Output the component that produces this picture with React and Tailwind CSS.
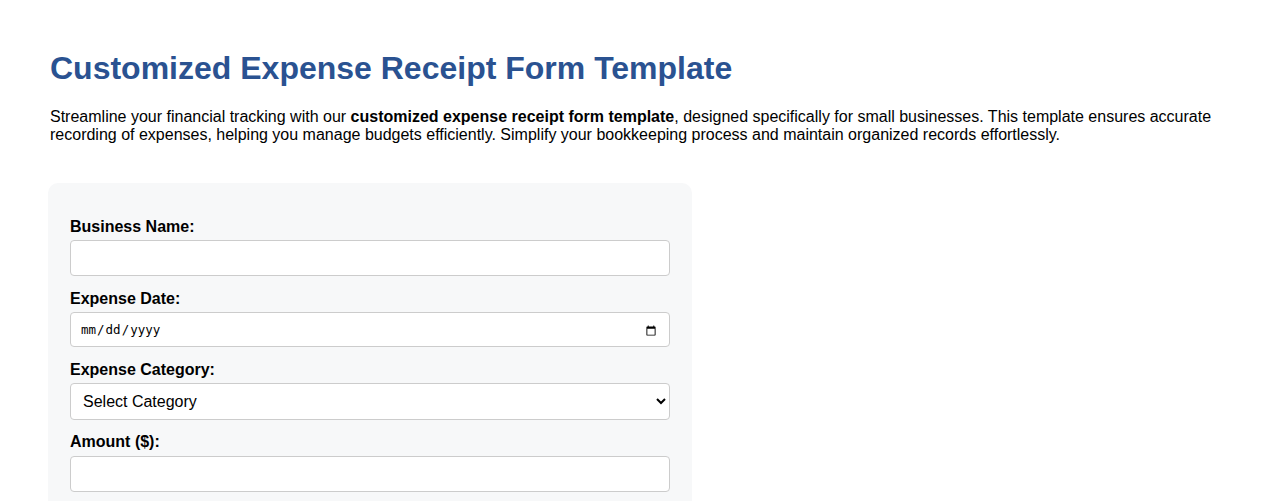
export default function App() {
  const label = "block text-[16px] leading-[18px] font-bold text-black";
  const box =
    "block w-full bg-white border border-[#cccccc] rounded-[4px] text-black outline-none";
  return (
    <div className="min-h-screen bg-white pl-[48px] pr-[48px] pt-[50px]" style={{ fontFamily: '"Liberation Sans", Arial, sans-serif' }}>
      <h1 className="ml-[2px] text-[32px] leading-[37px] font-bold text-[#2a5291]">
        Customized Expense Receipt Form Template
      </h1>
      <p className="ml-[2px] mt-[21px] text-[16px] leading-[18.4px] text-black">
        Streamline your financial tracking with our <strong className="font-bold">customized expense receipt form template</strong>, designed specifically for small businesses. This template ensures accurate recording of expenses, helping you manage budgets efficiently. Simplify your bookkeeping process and maintain organized records effortlessly.
      </p>
      <form className="mt-[38px] w-[644px] rounded-[10px] bg-[#f7f8f9] px-[22px] pt-[35px] pb-[20px]">
        <label className={label}>Business Name:</label>
        <input type="text" className={`${box} mt-[4px] h-[36px] px-[10px] text-[16px]`} />
        <label className={`${label} mt-[14px]`}>Expense Date:</label>
        <input
          type="date"
          className={`${box} mt-[4px] h-[35px] pl-[9px] pr-[10px] pt-[3px] text-[12.5px]`}
          style={{ fontFamily: '"DejaVu Sans Mono", monospace' }}
        />
        <label className={`${label} mt-[14px]`}>Expense Category:</label>
        <select className={`${box} mt-[4px] h-[37px] px-[8px] text-[16px]`} defaultValue="">
          <option value="">Select Category</option>
          <option>Office Supplies</option>
          <option>Travel</option>
          <option>Meals</option>
          <option>Utilities</option>
        </select>
        <label className={`${label} mt-[13px]`}>Amount ($):</label>
        <input type="number" className={`${box} mt-[5px] h-[36px] px-[10px] text-[16px]`} />
        <label className={`${label} mt-[13px]`}>Description:</label>
        <textarea className={`${box} mt-[5px] h-[80px] px-[10px] text-[16px]`} />
      </form>
    </div>
  );
}
